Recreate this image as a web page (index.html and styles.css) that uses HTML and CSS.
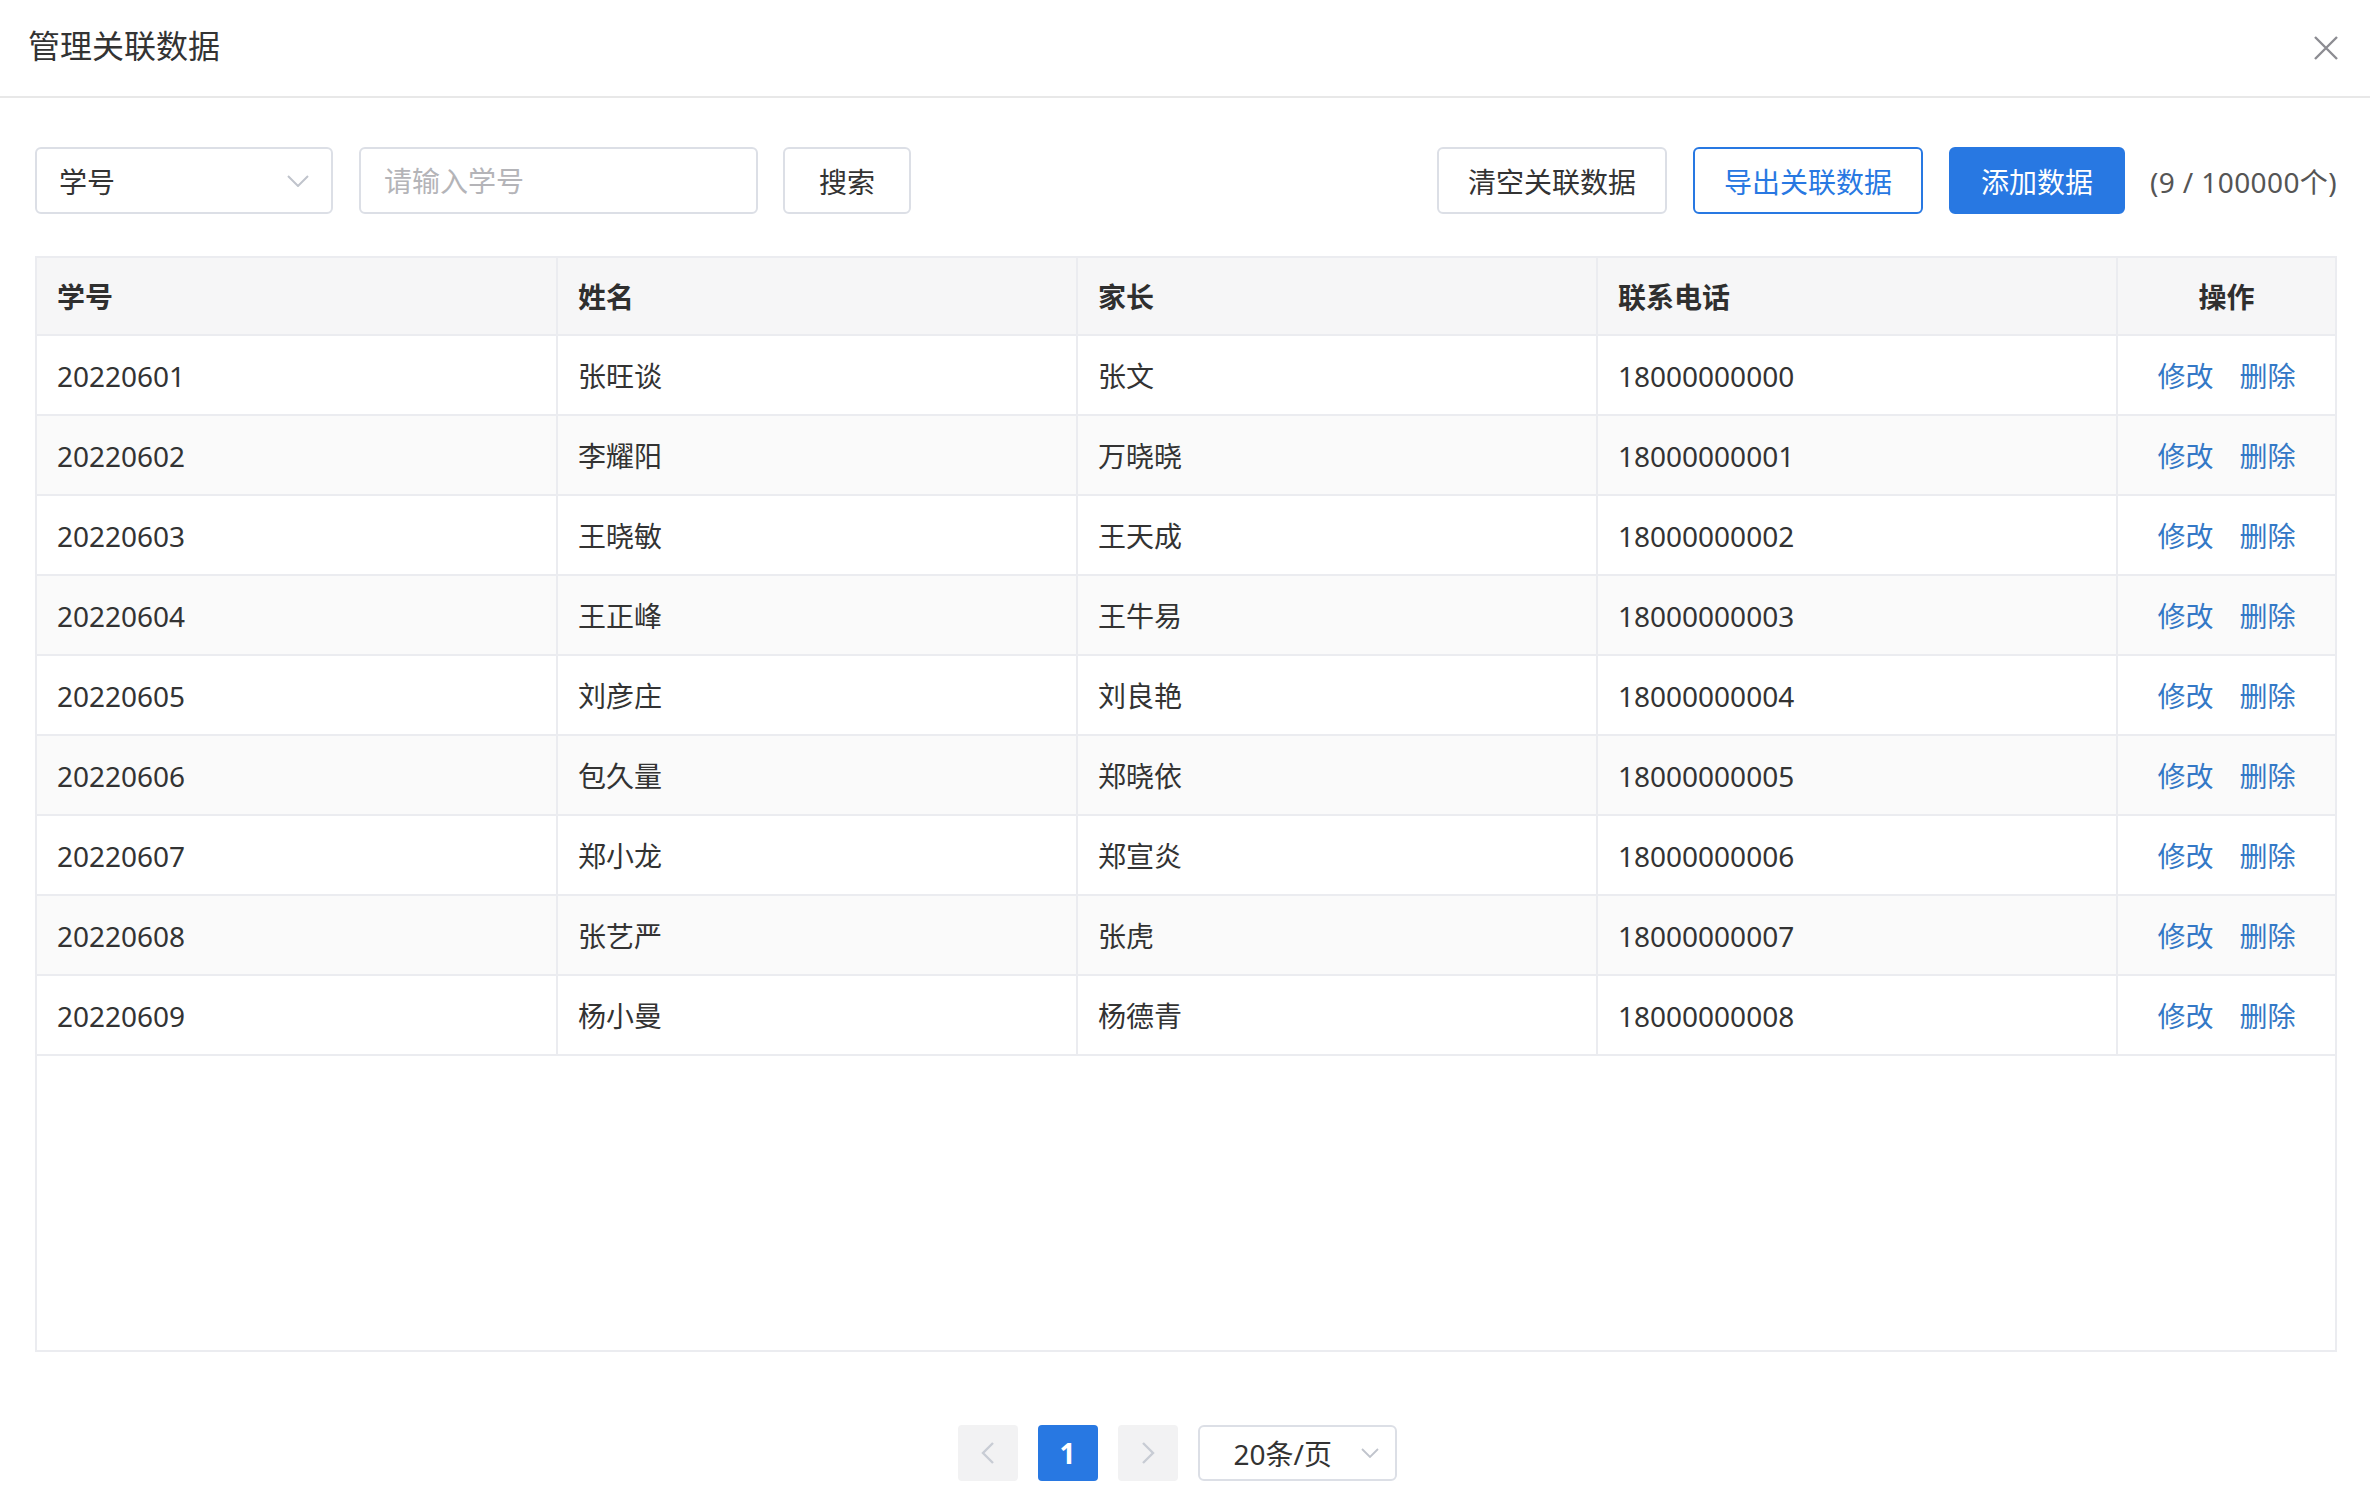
FILE: index.html
```html
<!DOCTYPE html>
<html lang="zh-CN">

<head>
    <meta charset="UTF-8">
    <meta name="viewport" content="width=device-width, initial-scale=1.0">
    <title>管理关联数据</title>
    <link rel="stylesheet" href="styles.css">
</head>

<body>
    <div class="dialog">
        <div class="dialog-header">
            <h2>管理关联数据</h2>
            <span class="close">
                <svg width="24" height="24" viewBox="0 0 24 24">
                    <path d="M1 1 L23 23 M23 1 L1 23" stroke="#8c8c92" stroke-width="2.4" fill="none" />
                </svg>
            </span>
        </div>

        <div class="dialog-body">
            <div class="toolbar">
                <div class="select field-select">
                    <span>学号</span>
                    <svg width="22" height="12" viewBox="0 0 22 12">
                        <polyline points="1,1 11,11 21,1" stroke="#c0c4cc" stroke-width="2" fill="none" />
                    </svg>
                </div>
                <input class="search-input" type="text" placeholder="请输入学号">
                <button class="btn btn-search">搜索</button>

                <div class="toolbar-right">
                    <button class="btn btn-clear">清空关联数据</button>
                    <button class="btn btn-outline">导出关联数据</button>
                    <button class="btn btn-primary">添加数据</button>
                    <span class="count">(9 / 100000个)</span>
                </div>
            </div>

            <div class="table-wrap">
                <table>
                    <colgroup>
                        <col style="width: 521px">
                        <col style="width: 520px">
                        <col style="width: 520px">
                        <col style="width: 520px">
                        <col>
                    </colgroup>
                    <thead>
                        <tr>
                            <th>学号</th>
                            <th>姓名</th>
                            <th>家长</th>
                            <th>联系电话</th>
                            <th class="center">操作</th>
                        </tr>
                    </thead>
                    <tbody id="rows"></tbody>
                </table>
            </div>

            <div class="pagination">
                <span class="page-btn">
                    <svg width="14" height="22" viewBox="0 0 14 22">
                        <polyline points="12,1 2,11 12,21" stroke="#c8ccd4" stroke-width="2.4" fill="none" />
                    </svg>
                </span>
                <span class="page-btn active">1</span>
                <span class="page-btn">
                    <svg width="14" height="22" viewBox="0 0 14 22">
                        <polyline points="2,1 12,11 2,21" stroke="#c8ccd4" stroke-width="2.4" fill="none" />
                    </svg>
                </span>
                <div class="select page-size">
                    <span>20条/页</span>
                    <svg width="18" height="10" viewBox="0 0 18 10">
                        <polyline points="1,1 9,9 17,1" stroke="#c0c4cc" stroke-width="1.8" fill="none" />
                    </svg>
                </div>
            </div>
        </div>
    </div>

    <script>
        const data = [
            ['20220601', '张旺谈', '张文', '18000000000'],
            ['20220602', '李耀阳', '万晓晓', '18000000001'],
            ['20220603', '王晓敏', '王天成', '18000000002'],
            ['20220604', '王正峰', '王牛易', '18000000003'],
            ['20220605', '刘彦庄', '刘良艳', '18000000004'],
            ['20220606', '包久量', '郑晓依', '18000000005'],
            ['20220607', '郑小龙', '郑宣炎', '18000000006'],
            ['20220608', '张艺严', '张虎', '18000000007'],
            ['20220609', '杨小曼', '杨德青', '18000000008']
        ];

        let html = '';
        data.forEach(function (row) {
            html += '<tr>';
            row.forEach(function (cell) {
                html += '<td>' + cell + '</td>';
            });
            html += '<td class="center"><a href="#">修改</a><a href="#">删除</a></td>';
            html += '</tr>';
        });
        document.getElementById('rows').innerHTML = html;
    </script>
</body>

</html>
```

FILE: styles.css
```css
* {
    box-sizing: border-box;
}

body {
    margin: 0;
    font-family: "Noto Sans", "Noto Sans CJK SC", sans-serif;
    color: #333;
    background: #fff;
}

.dialog {
    width: 2370px;
    height: 1510px;
}

.dialog-header {
    height: 98px;
    display: flex;
    align-items: center;
    justify-content: space-between;
    padding: 0 32px 0 28px;
    border-bottom: 2px solid #e8e8e8;
}

.dialog-header h2 {
    margin: 0;
    font-size: 32px;
    font-weight: normal;
    line-height: 40px;
    color: #333;
    position: relative;
    top: -2px;
}

.close {
    display: flex;
    width: 24px;
    height: 24px;
}

.dialog-body {
    padding: 49px 33px 0 35px;
}

.toolbar {
    display: flex;
    align-items: center;
    height: 67px;
}

.select {
    display: flex;
    align-items: center;
    justify-content: space-between;
    border: 2px solid #dcdfe6;
    border-radius: 6px;
    font-size: 28px;
    color: #333;
}

.field-select {
    width: 298px;
    height: 67px;
    padding: 0 22px 0 22px;
}

.search-input {
    width: 399px;
    height: 67px;
    margin-left: 26px;
    padding: 0 23px;
    border: 2px solid #dcdfe6;
    border-radius: 6px;
    font-family: inherit;
    font-size: 28px;
    color: #333;
    outline: none;
}

.search-input::placeholder {
    color: #b4b4b8;
}

.btn {
    height: 67px;
    border: 2px solid #dcdfe6;
    border-radius: 6px;
    background: #fff;
    font-family: inherit;
    font-size: 28px;
    color: #333;
    padding: 0;
    cursor: pointer;
}

.btn-search {
    width: 128px;
    margin-left: 25px;
}

.toolbar-right {
    margin-left: auto;
    display: flex;
    align-items: center;
}

.btn-clear {
    width: 230px;
}

.btn-outline {
    width: 230px;
    margin-left: 26px;
    border-color: #2878e2;
    color: #2878e2;
}

.btn-primary {
    width: 176px;
    margin-left: 26px;
    border-color: #2878e2;
    background: #2878e2;
    color: #fff;
}

.count {
    margin-left: 25px;
    font-size: 28px;
    letter-spacing: 0.4px;
    color: #555;
}

.table-wrap {
    margin-top: 42px;
    height: 1096px;
    border: 2px solid #ebecf0;
}

table {
    width: 100%;
    table-layout: fixed;
    border-collapse: separate;
    border-spacing: 0;
    font-size: 28px;
}

th,
td {
    text-align: left;
    padding: 2px 20px 0;
    border-right: 2px solid #ebecf0;
    border-bottom: 2px solid #ebecf0;
    white-space: nowrap;
}

th:last-child,
td:last-child {
    border-right: none;
}

th {
    line-height: 74px;
    background: #f6f6f7;
    font-weight: bold;
    color: #2f2f2f;
}

td {
    line-height: 76px;
    color: #333;
}

tbody tr:nth-child(even) td {
    background: #fafafa;
}

.center {
    text-align: center;
}

td a {
    color: #3478c6;
    text-decoration: none;
    margin: 0 13px;
}

.pagination {
    display: flex;
    justify-content: center;
    align-items: center;
    margin-top: 73px;
    padding-right: 18px;
}

.page-btn {
    width: 60px;
    height: 56px;
    margin-right: 20px;
    border-radius: 4px;
    background: #f2f2f3;
    display: flex;
    align-items: center;
    justify-content: center;
    font-size: 28px;
}

.page-btn.active {
    background: #2878e2;
    color: #fff;
    font-weight: bold;
}

.page-size {
    width: 199px;
    height: 56px;
    padding: 0 16px 0 34px;
}
```
